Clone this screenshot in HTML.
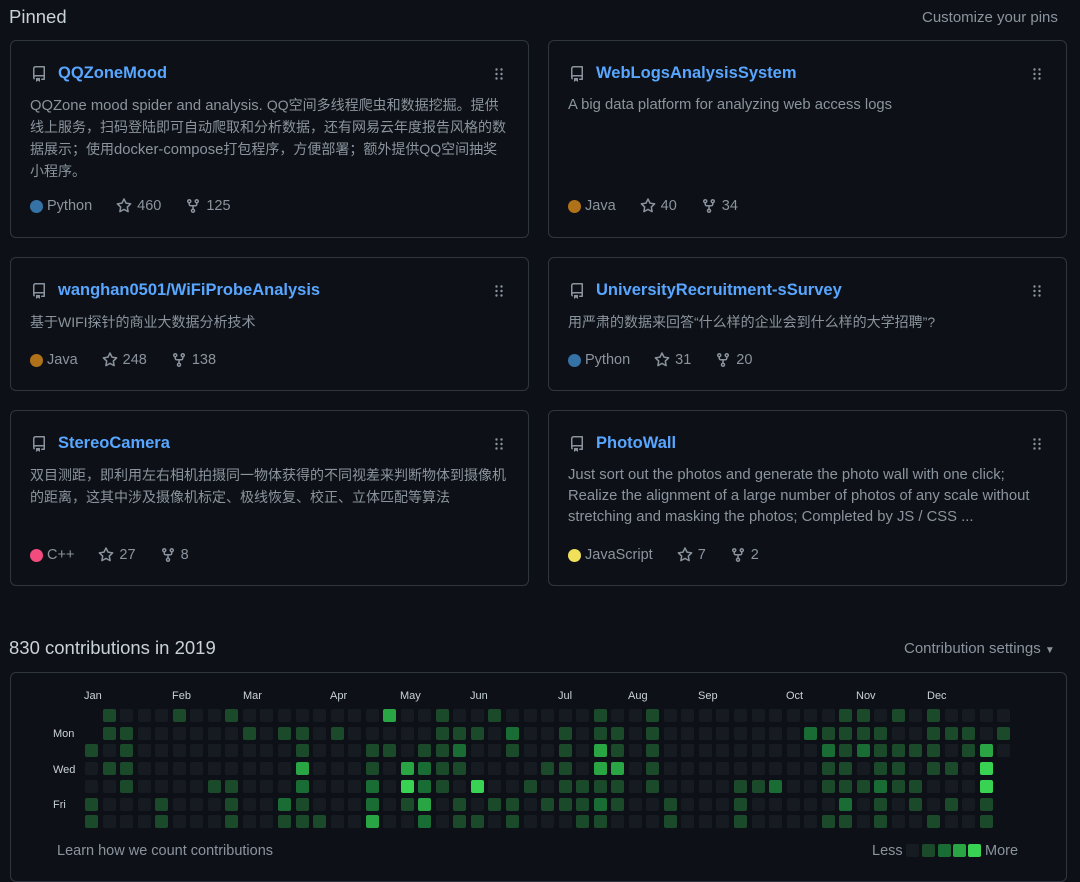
<!DOCTYPE html>
<html><head><meta charset="utf-8">
<style>
*{box-sizing:border-box;margin:0;padding:0}
body{width:1080px;height:866px;background:#0d1117;color:#c9d1d9;font-family:"Liberation Sans","Noto Sans CJK SC",sans-serif;position:relative;overflow:hidden}
.abs{position:absolute}
.h{font-size:18.5px;color:#c9d1d9}
.card{position:absolute;border:1px solid #30363d;border-radius:6px;background:#0d1117}
.title{position:absolute;left:47px;top:23px;font-size:16.5px;font-weight:bold;color:#58a6ff}
.repo{position:absolute;left:20px;top:25px}
.drag{position:absolute;right:25px;top:27px}
.desc{position:absolute;left:19px;top:54px;right:6px;font-size:14.8px;line-height:21px;color:#8b949e;white-space:nowrap}
.c{font-size:14px}
.meta{position:absolute;left:19px;font-size:14.5px;color:#8b949e;display:flex;align-items:center;white-space:nowrap}
.dot{width:13px;height:13px;border-radius:50%;display:inline-block;margin-right:4px}
.meta svg{margin-right:5px}
.gap{width:24px;display:inline-block}
.cell{position:absolute;width:13px;height:13px;border-radius:2px}
.mon{position:absolute;top:690px;font-size:11px;color:#c9d1d9}
.day{position:absolute;left:53px;font-size:11px;color:#c9d1d9}
</style></head><body>
<div class="abs h" style="left:9px;top:6px">Pinned</div>
<div class="abs" style="left:922px;top:9px;font-size:15px;color:#8b949e">Customize your pins</div>

<svg width="0" height="0" style="position:absolute">
<defs>
<symbol id="repo" viewBox="0 0 16 16"><path fill="#8b949e" d="M2 2.5A2.5 2.5 0 0 1 4.5 0h8.75a.75.75 0 0 1 .75.75v12.5a.75.75 0 0 1-.75.75h-2.5a.75.75 0 0 1 0-1.5h1.75v-2h-8a1 1 0 0 0-.71 1.71.75.75 0 0 1-1.07 1.050A2.5 2.5 0 0 1 2 11.5Zm10.5-1h-8a1 1 0 0 0-1 1v6.71A2.5 2.5 0 0 1 4.5 9h8ZM5 12.25a.25.25 0 0 1 .25-.25h3.5a.25.25 0 0 1 .25.25v3.25a.25.25 0 0 1-.4.2l-1.45-1.09a.25.25 0 0 0-.3 0L5.4 15.7a.25.25 0 0 1-.4-.2Z"/></symbol>
<symbol id="star" viewBox="0 0 16 16"><path fill="#8b949e" d="M8 .25a.75.75 0 0 1 .67.42l1.88 3.8 4.2.61a.75.75 0 0 1 .41 1.28l-3.04 2.96.72 4.18a.75.75 0 0 1-1.09.79L8 12.31 4.25 14.3a.75.75 0 0 1-1.09-.79l.72-4.18L.84 6.37a.75.75 0 0 1 .42-1.28l4.2-.61L7.33.67A.75.75 0 0 1 8 .25Zm0 2.44L6.63 5.46a.75.75 0 0 1-.56.41l-3.07.45 2.22 2.16a.75.75 0 0 1 .22.66l-.52 3.06 2.74-1.44a.75.75 0 0 1 .7 0l2.74 1.44-.52-3.06a.75.75 0 0 1 .21-.66l2.22-2.16-3.07-.45a.75.75 0 0 1-.56-.41Z"/></symbol>
<symbol id="fork" viewBox="0 0 16 16"><path fill="#8b949e" d="M5 5.37v.88c0 .41.34.75.75.75h4.5a.75.75 0 0 0 .75-.75v-.88a2.25 2.25 0 1 1 1.5 0v.88A2.25 2.25 0 0 1 10.25 8.5h-1.5v2.13a2.25 2.25 0 1 1-1.5 0V8.5h-1.5A2.25 2.25 0 0 1 3.5 6.25v-.88a2.25 2.25 0 1 1 1.5 0ZM5 3.25a.75.75 0 1 0-1.5 0 .75.75 0 0 0 1.5 0Zm6.75.75a.75.75 0 1 0 0-1.5.75.75 0 0 0 0 1.5Zm-3 8.75a.75.75 0 1 0-1.5 0 .75.75 0 0 0 1.5 0Z"/></symbol>
<symbol id="drag" viewBox="0 0 8 12"><g fill="#8b949e"><circle cx="1.5" cy="1.5" r="1.2"/><circle cx="6.5" cy="1.5" r="1.2"/><circle cx="1.5" cy="6" r="1.2"/><circle cx="6.5" cy="6" r="1.2"/><circle cx="1.5" cy="10.5" r="1.2"/><circle cx="6.5" cy="10.5" r="1.2"/></g></symbol>
</defs></svg>

<div class="card" style="left:10px;top:40px;width:519px;height:198px">
<svg class="repo" width="16" height="16"><use href="#repo"/></svg>
<div class="title">QQZoneMood</div><svg class="drag" width="8" height="12"><use href="#drag"/></svg>
<div class="desc">QQZone mood spider and analysis. <span class="c">QQ空间多线程爬虫和数据挖掘。提供</span><br><span class="c">线上服务，扫码登陆即可自动爬取和分析数据，还有网易云年度报告风格的数</span><br><span class="c">据展示；使用</span>docker-compose<span class="c">打包程序，方便部署；额外提供QQ空间抽奖</span><br><span class="c">小程序。</span></div>
<div class="meta" style="top:157px"><span class="dot" style="background:#3572a5"></span>Python<span class="gap"></span><svg width="16" height="16"><use href="#star"/></svg>460<span class="gap"></span><svg width="16" height="16"><use href="#fork"/></svg>125</div>
</div>
<div class="card" style="left:548px;top:40px;width:519px;height:198px">
<svg class="repo" width="16" height="16"><use href="#repo"/></svg>
<div class="title">WebLogsAnalysisSystem</div><svg class="drag" width="8" height="12"><use href="#drag"/></svg>
<div class="desc">A big data platform for analyzing web access logs</div>
<div class="meta" style="top:157px"><span class="dot" style="background:#b07219"></span>Java<span class="gap"></span><svg width="16" height="16"><use href="#star"/></svg>40<span class="gap"></span><svg width="16" height="16"><use href="#fork"/></svg>34</div>
</div>
<div class="card" style="left:10px;top:257px;width:519px;height:134px">
<svg class="repo" width="16" height="16"><use href="#repo"/></svg>
<div class="title">wanghan0501/WiFiProbeAnalysis</div><svg class="drag" width="8" height="12"><use href="#drag"/></svg>
<div class="desc"><span class="c">基于WIFI探针的商业大数据分析技术</span></div>
<div class="meta" style="top:94px"><span class="dot" style="background:#b07219"></span>Java<span class="gap"></span><svg width="16" height="16"><use href="#star"/></svg>248<span class="gap"></span><svg width="16" height="16"><use href="#fork"/></svg>138</div>
</div>
<div class="card" style="left:548px;top:257px;width:519px;height:134px">
<svg class="repo" width="16" height="16"><use href="#repo"/></svg>
<div class="title">UniversityRecruitment-sSurvey</div><svg class="drag" width="8" height="12"><use href="#drag"/></svg>
<div class="desc"><span class="c">用严肃的数据来回答“什么样的企业会到什么样的大学招聘”?</span></div>
<div class="meta" style="top:94px"><span class="dot" style="background:#3572a5"></span>Python<span class="gap"></span><svg width="16" height="16"><use href="#star"/></svg>31<span class="gap"></span><svg width="16" height="16"><use href="#fork"/></svg>20</div>
</div>
<div class="card" style="left:10px;top:410px;width:519px;height:176px">
<svg class="repo" width="16" height="16"><use href="#repo"/></svg>
<div class="title">StereoCamera</div><svg class="drag" width="8" height="12"><use href="#drag"/></svg>
<div class="desc"><span class="c">双目测距，即利用左右相机拍摄同一物体获得的不同视差来判断物体到摄像机<br>的距离，这其中涉及摄像机标定、极线恢复、校正、立体匹配等算法</span></div>
<div class="meta" style="top:136px"><span class="dot" style="background:#f34b7d"></span>C++<span class="gap"></span><svg width="16" height="16"><use href="#star"/></svg>27<span class="gap"></span><svg width="16" height="16"><use href="#fork"/></svg>8</div>
</div>
<div class="card" style="left:548px;top:410px;width:519px;height:176px">
<svg class="repo" width="16" height="16"><use href="#repo"/></svg>
<div class="title">PhotoWall</div><svg class="drag" width="8" height="12"><use href="#drag"/></svg>
<div class="desc">Just sort out the photos and generate the photo wall with one click;<br>Realize the alignment of a large number of photos of any scale without<br>stretching and masking the photos; Completed by JS / CSS ...</div>
<div class="meta" style="top:136px"><span class="dot" style="background:#f1e05a"></span>JavaScript<span class="gap"></span><svg width="16" height="16"><use href="#star"/></svg>7<span class="gap"></span><svg width="16" height="16"><use href="#fork"/></svg>2</div>
</div>

<div class="abs h" style="left:9px;top:637px">830 contributions in 2019</div>
<div class="abs" style="left:904px;top:640px;font-size:15px;color:#8b949e">Contribution settings <span style="font-size:10px">▼</span></div>
<div class="card" style="left:10px;top:672px;width:1057px;height:210px"></div>
<div class="mon" style="left:84px">Jan</div><div class="mon" style="left:172px">Feb</div><div class="mon" style="left:243px">Mar</div><div class="mon" style="left:330px">Apr</div><div class="mon" style="left:400px">May</div><div class="mon" style="left:470px">Jun</div><div class="mon" style="left:558px">Jul</div><div class="mon" style="left:628px">Aug</div><div class="mon" style="left:698px">Sep</div><div class="mon" style="left:786px">Oct</div><div class="mon" style="left:856px">Nov</div><div class="mon" style="left:927px">Dec</div>
<div class="day" style="top:728px">Mon</div><div class="day" style="top:764px">Wed</div><div class="day" style="top:799px">Fri</div>
<div id="grid"></div>
<div class="abs" style="left:57px;top:843px;font-size:14.5px;color:#8b949e">Learn how we count contributions</div>
<div class="abs" style="left:872px;top:843px;font-size:14.5px;color:#8b949e">Less</div>
<div class="cell" style="left:906px;top:844px;background:#161b22"></div>
<div class="cell" style="left:922px;top:844px;background:#1b4a2a"></div>
<div class="cell" style="left:938px;top:844px;background:#196c34"></div>
<div class="cell" style="left:953px;top:844px;background:#29a544"></div>
<div class="cell" style="left:968px;top:844px;background:#39d353"></div>
<div class="abs" style="left:985px;top:843px;font-size:14.5px;color:#8b949e">More</div>

<script>
var R=[
"x1000100100000000300100100"+"0"+"00100100000000001101010000",
"x11000000101101000001110200"+"10110100000000211110011101",
"101000000000100011011200100"+"10310100000000021211110130",
"011000000000300010321100001"+"103301000000000110110110"+"4x",
"001000011000200020421040010"+"111101000011200111211000"+"4x",
"100010001002100020130101101"+"112100100010000020101010"+"1x",
"100010001001110030020110100"+"011000100010000110100100"+"1x"
];
var cols=["#161b22","#1b4a2a","#196c34","#29a544","#39d353"];
var g=document.getElementById("grid"),h="";
for(var r=0;r<7;r++){var s=R[r];for(var c=0;c<53;c++){var ch=s[c]||"x";if(ch==="x")continue;
h+='<div class="cell" style="left:'+(85+c*17.54).toFixed(1)+'px;top:'+(709+r*17.7).toFixed(1)+'px;background:'+cols[+ch]+'"></div>';}}
g.innerHTML=h;
</script>
</body></html>
